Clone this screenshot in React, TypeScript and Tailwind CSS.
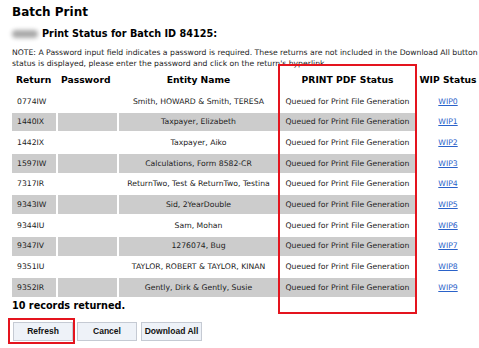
import React from 'react';

interface BatchRow {
  returnId: string;
  entity: string;
  status: string;
  wip: string;
}

const rows: BatchRow[] = [
  { returnId: '0774IW', entity: 'Smith, HOWARD & Smith, TERESA', status: 'Queued for Print File Generation', wip: 'WIP0' },
  { returnId: '1440IX', entity: 'Taxpayer, Elizabeth', status: 'Queued for Print File Generation', wip: 'WIP1' },
  { returnId: '1442IX', entity: 'Taxpayer, Aiko', status: 'Queued for Print File Generation', wip: 'WIP2' },
  { returnId: '1597IW', entity: 'Calculations, Form 8582-CR', status: 'Queued for Print File Generation', wip: 'WIP3' },
  { returnId: '7317IR', entity: 'ReturnTwo, Test & ReturnTwo, Testina', status: 'Queued for Print File Generation', wip: 'WIP4' },
  { returnId: '9343IW', entity: 'Sid, 2YearDouble', status: 'Queued for Print File Generation', wip: 'WIP5' },
  { returnId: '9344IU', entity: 'Sam, Mohan', status: 'Queued for Print File Generation', wip: 'WIP6' },
  { returnId: '9347IV', entity: '1276074, Bug', status: 'Queued for Print File Generation', wip: 'WIP7' },
  { returnId: '9351IU', entity: 'TAYLOR, ROBERT & TAYLOR, KINAN', status: 'Queued for Print File Generation', wip: 'WIP8' },
  { returnId: '9352IR', entity: 'Gently, Dirk & Gently, Susie', status: 'Queued for Print File Generation', wip: 'WIP9' },
];

const verdana = "font-['Verdana','DejaVu_Sans',sans-serif]";

export default function App() {
  return (
    <div className={`relative h-[348px] w-[479px] overflow-hidden bg-white text-[#222] ${verdana}`}>
      <div className="w-[600px] pl-[10px] pt-[3px]">
        <h1 className="pl-[2px] text-[12px] font-bold leading-[18px] text-black">Batch Print</h1>

        <div className="mt-[6px] flex h-[14px] items-center gap-[4px] pl-[2px]">
          <div className="h-[8px] w-[26px] rounded-sm bg-[#a9a9a9] blur-[2px]" />
          <h2 className="text-[9.7px] font-bold leading-[14px] text-black">Print Status for Batch ID 84125:</h2>
        </div>

        <p className="mt-[6px] whitespace-nowrap pl-[2px] text-[7.7px] leading-[11px] text-[#222]">
          NOTE: A Password input field indicates a password is required. These returns are not included in the Download All button until a password is entered. Once the
          <br />
          status is displayed, please enter the password and click on the return's hyperlink.
        </p>

        <table className="-mt-[1px] border-separate border-spacing-[2px] text-[7.7px]">
          <thead>
            <tr className="h-[20px] text-[9.2px] font-bold text-black">
              <th className="w-[44px] px-[4px] text-left">Return</th>
              <th className="w-[59px] px-[3px] text-left">Password</th>
              <th className="w-[159px] text-center">Entity Name</th>
              <th className="w-[135px] text-center">PRINT PDF Status</th>
              <th className="w-[62px] text-center">WIP Status</th>
            </tr>
          </thead>
          <tbody>
            {rows.map((row, i) => {
              const shade = i % 2 === 1 ? 'bg-[#cccccc]' : 'bg-white';
              return (
                <tr key={row.returnId} className="h-[18.7px]">
                  <td className={`${shade} px-[5px] text-left`}>{row.returnId}</td>
                  <td className={shade} />
                  <td className={`${shade} whitespace-nowrap text-center`}>{row.entity}</td>
                  <td className={`${shade} whitespace-nowrap text-center`}>{row.status}</td>
                  <td className="text-center">
                    <a href="#" className="text-[#2a62c9] underline">
                      {row.wip}
                    </a>
                  </td>
                </tr>
              );
            })}
          </tbody>
        </table>

        <p className="pl-[2px] text-[9.7px] font-bold leading-[14px] text-black">10 records returned.</p>

        <div className="mt-[9px] flex gap-[4px] pl-[3px] font-['Liberation_Sans',Arial,sans-serif]">
          <button className="h-[19px] w-[60px] border border-[#c5cad3] bg-[#eef2f8] text-[8.5px] font-bold text-[#111]">
            Refresh
          </button>
          <button className="h-[19px] w-[60px] border border-[#c5cad3] bg-[#eef2f8] text-[8.5px] font-bold text-[#111]">
            Cancel
          </button>
          <button className="h-[19px] w-[61px] border border-[#c5cad3] bg-[#eef2f8] text-[8.5px] font-bold text-[#111]">
            Download All
          </button>
        </div>
      </div>

      <div className="pointer-events-none absolute left-[278px] top-[64px] h-[250px] w-[139px] border-[2px] border-[#e4141e]" />
      <div className="pointer-events-none absolute left-[8px] top-[318px] h-[26px] w-[67px] border-[2px] border-[#e4141e]" />
    </div>
  );
}
